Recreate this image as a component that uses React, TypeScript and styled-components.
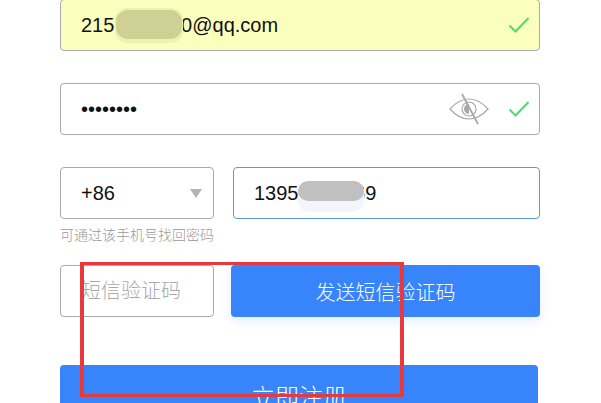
import React from "react";
import styled, { createGlobalStyle } from "styled-components";

const GlobalStyle = createGlobalStyle`
  html, body {
    margin: 0;
    padding: 0;
    background: #fff;
    overflow: hidden;
  }
  body {
    font-family: "Liberation Sans", "Noto Sans CJK SC", sans-serif;
  }
`;

const Page = styled.div`
  position: relative;
  width: 601px;
  height: 403px;
  overflow: hidden;
`;

const Form = styled.form`
  display: flex;
  flex-direction: column;
  width: 480px;
  margin-top: -1px;
  margin-left: 60px;
`;

const Row = styled.div<{ $gap?: number; $bottom?: number }>`
  display: flex;
  gap: ${(p) => p.$gap ?? 0}px;
  margin-bottom: ${(p) => p.$bottom ?? 32}px;
`;

const Field = styled.div<{ $width?: number; $bg?: string; $border?: string }>`
  position: relative;
  box-sizing: border-box;
  display: flex;
  align-items: center;
  width: ${(p) => (p.$width ? `${p.$width}px` : "100%")};
  height: 52px;
  padding: 0 20px;
  background: ${(p) => p.$bg ?? "#fff"};
  border: 1px solid ${(p) => p.$border ?? "#aaa"};
  border-radius: 4px;
`;

const TextInput = styled.input`
  flex: 1;
  min-width: 0;
  padding: 0;
  border: 0;
  outline: 0;
  background: transparent;
  color: #111;
  font-family: "Liberation Sans", sans-serif;
  font-size: 20px;

  &::placeholder {
    color: #aaa;
    font-family: "Noto Sans CJK SC", sans-serif;
    font-weight: 300;
    font-size: 20px;
  }
`;

const CheckIcon = styled.svg`
  position: absolute;
  right: 9px;
  top: 16px;
  width: 22px;
  height: 18px;
`;

const EyeIcon = styled.svg`
  position: absolute;
  right: 50px;
  top: 9px;
  width: 40px;
  height: 32px;
`;

const Caret = styled.span`
  position: absolute;
  right: 11px;
  top: 21px;
  width: 0;
  height: 0;
  border-left: 6px solid transparent;
  border-right: 6px solid transparent;
  border-top: 9px solid #b4b4b4;
`;

const Hint = styled.p`
  margin: 7px 0 22px;
  color: #999;
  font-family: "Noto Sans CJK SC", sans-serif;
  font-size: 14px;
  font-weight: 300;
  line-height: 17px;
`;

const Button = styled.button<{ $width: number; $size: number; $shadow?: boolean }>`
  box-sizing: border-box;
  width: ${(p) => p.$width}px;
  height: 52px;
  padding: 0;
  border: 0;
  border-radius: 4px;
  background: #3784fb;
  color: #fff;
  font-family: "Noto Sans CJK SC", sans-serif;
  font-size: ${(p) => p.$size}px;
  font-weight: 300;
  box-shadow: ${(p) => (p.$shadow ? "0 4px 12px rgba(55, 132, 251, 0.14)" : "none")};
`;

const SubmitButton = styled(Button)`
  height: 60px;
`;

const Smudge = styled.div<{ $x: number; $y: number; $w: number; $h: number; $bg: string }>`
  position: absolute;
  left: ${(p) => p.$x}px;
  top: ${(p) => p.$y}px;
  width: ${(p) => p.$w}px;
  height: ${(p) => p.$h}px;
  background: ${(p) => p.$bg};
  border-radius: 12px;
  filter: blur(0.7px);
`;

const RedBox = styled.div`
  position: absolute;
  left: 80px;
  top: 262px;
  box-sizing: border-box;
  width: 324px;
  height: 135px;
  border-style: solid;
  border-color: #e8393f;
  border-width: 3px 4px;
  pointer-events: none;
`;

const Check = () => (
  <CheckIcon viewBox="0 0 22 18" fill="none">
    <path d="M1.5 9.5 L7.5 15.5 L20.5 2" stroke="#45e070" strokeWidth="2" />
  </CheckIcon>
);

const Eye = () => (
  <EyeIcon viewBox="0 0 40 32" fill="none" stroke="#a8a8a8" strokeWidth="1.2">
    <path d="M1 16 C 8 8, 14 6, 20 6 C 26 6, 32 8, 39 16 C 32 24, 26 26, 20 26 C 14 26, 8 24, 1 16 Z" />
    <circle cx="20" cy="16" r="7" />
    <path d="M20 11 A5 5 0 0 0 20 21 Z" fill="#a8a8a8" stroke="none" />
    <path d="M13 1 L29 31" strokeWidth="1.8" />
  </EyeIcon>
);

export default function App() {
  return (
    <Page>
      <GlobalStyle />
      <Form>
        <Row>
          <Field $bg="#fbffbd">
            <TextInput defaultValue="2151234560@qq.com" readOnly />
            <Check />
          </Field>
        </Row>
        <Row>
          <Field>
            <TextInput type="password" defaultValue="12345678" readOnly />
            <Eye />
            <Check />
          </Field>
        </Row>
        <Row $gap={19} $bottom={0}>
          <Field $width={154}>
            <TextInput defaultValue="+86" readOnly />
            <Caret />
          </Field>
          <Field $width={307} $border="#5b9bd5">
            <TextInput defaultValue="13951234569" readOnly />
          </Field>
        </Row>
        <Hint>可通过该手机号找回密码</Hint>
        <Row $gap={17} $bottom={48}>
          <Field $width={154}>
            <TextInput placeholder="短信验证码" readOnly />
          </Field>
          <Button type="button" $width={309} $size={20} $shadow>
            发送短信验证码
          </Button>
        </Row>
        <SubmitButton type="button" $width={478} $size={24}>
          立即注册
        </SubmitButton>
      </Form>
      <Smudge $x={115} $y={8} $w={68} $h={35} $bg="#eef1b4" />
      <Smudge $x={116} $y={10} $w={66} $h={29} $bg="#ced094" />
      <Smudge $x={298} $y={182} $w={66} $h={30} $bg="#f2f6fb" />
      <Smudge $x={298} $y={181} $w={66} $h={20} $bg="#c0c0c0" />
      <RedBox />
    </Page>
  );
}
